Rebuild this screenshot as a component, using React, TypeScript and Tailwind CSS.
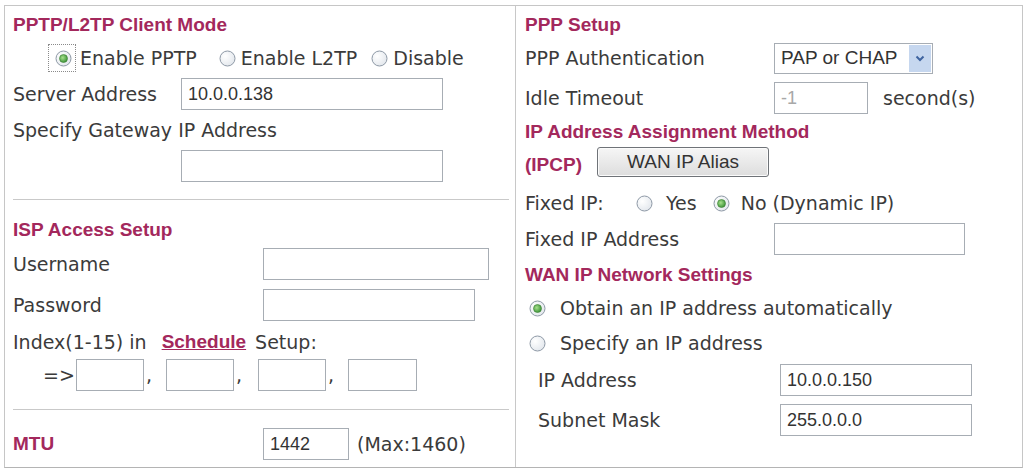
import { useId } from "react";

const LABEL = "font-['DejaVu_Sans',sans-serif] text-[19px] text-[#3b3b3b] whitespace-nowrap";
const TITLE = "font-['Liberation_Sans',Arial,sans-serif] font-bold text-[19px] text-[#a3285c] whitespace-nowrap";
const FIELD =
    "h-[32px] border border-[#a7adb4] bg-white px-[6px] flex items-center font-['Liberation_Sans',Arial,sans-serif] text-[18px] text-[#333]";

function Radio({ checked = false }: { checked?: boolean }) {
    const id = useId();
    return (
        <svg width="17" height="17" viewBox="0 0 17 17" className="shrink-0">
            <defs>
                <radialGradient id={`${id}-bg`} cx="0.35" cy="0.35" r="0.8">
                    <stop offset="0" stopColor="#ffffff" />
                    <stop offset="1" stopColor="#dfe4ea" />
                </radialGradient>
                <radialGradient id={`${id}-dot`} cx="0.4" cy="0.4" r="0.7">
                    <stop offset="0" stopColor="#a6e08c" />
                    <stop offset="1" stopColor="#2f8a2c" />
                </radialGradient>
            </defs>
            <circle cx="8.5" cy="8.5" r="7.5" fill={`url(#${id}-bg)`} stroke="#8e99a6" />
            {checked && <circle cx="8.5" cy="8.5" r="4" fill={`url(#${id}-dot)`} stroke="#3c7f35" strokeWidth="0.6" />}
        </svg>
    );
}

function Field({ value = "", className = "", muted = false }: { value?: string; className?: string; muted?: boolean }) {
    return (
        <div className={`${FIELD} ${className}`}>
            <span className={muted ? "text-[#a8a8a8]" : ""}>{value}</span>
        </div>
    );
}

function Row({ className = "", children }: { className?: string; children: React.ReactNode }) {
    return <div className={`h-[32px] flex items-center shrink-0 ${className}`}>{children}</div>;
}

function ClientMode() {
    return (
        <div className="w-[511px] border-r border-[#c8c8c8] pl-[8px] pr-[6px] flex flex-col">
            <Row className="mt-[3px]">
                <span className={TITLE}>PPTP/L2TP Client Mode</span>
            </Row>
            <Row className="mt-px">
                <span className="ml-[35px] w-[28px] h-[28px] border border-dotted border-[#8a8a8a] flex items-center pl-[6px]">
                    <Radio checked />
                </span>
                <span className={`${LABEL} ml-[4px]`}>Enable PPTP</span>
                <span className="ml-[22px]"><Radio /></span>
                <span className={`${LABEL} ml-[5px]`}>Enable L2TP</span>
                <span className="ml-[14px]"><Radio /></span>
                <span className={`${LABEL} ml-[5px]`}>Disable</span>
            </Row>
            <Row className="mt-[4px]">
                <span className={`${LABEL} w-[168px]`}>Server Address</span>
                <Field value="10.0.0.138" className="w-[262px]" />
            </Row>
            <Row className="mt-[4px]">
                <span className={LABEL}>Specify Gateway IP Address</span>
            </Row>
            <Row className="mt-[4px]">
                <Field className="ml-[168px] w-[262px]" />
            </Row>
            <div className="mt-[17px] border-t border-[#c9c9c9]" />

            <Row className="mt-[14px]">
                <span className={TITLE}>ISP Access Setup</span>
            </Row>
            <Row className="mt-[2px]">
                <span className={`${LABEL} w-[250px]`}>Username</span>
                <Field className="w-[226px]" />
            </Row>
            <Row className="mt-[9px]">
                <span className={`${LABEL} w-[250px]`}>Password</span>
                <Field className="w-[212px]" />
            </Row>
            <Row className="mt-[5px]">
                <span className={LABEL}>Index(1-15) in</span>
                <a className={`${TITLE} underline ml-[15px]`}>Schedule</a>
                <span className={`${LABEL} ml-[9px]`}>Setup:</span>
            </Row>
            <Row className="mt-px">
                <span className={`${LABEL} ml-[30px] w-[33px]`}>=&gt;</span>
                <Field className="w-[68px]" />
                <span className={`${LABEL} ml-[2px] w-[20px]`}>,</span>
                <Field className="w-[68px]" />
                <span className={`${LABEL} ml-[2px] w-[22px]`}>,</span>
                <Field className="w-[68px]" />
                <span className={`${LABEL} ml-[2px] w-[20px]`}>,</span>
                <Field className="w-[69px]" />
            </Row>
            <div className="mt-[18px] border-t border-[#c9c9c9]" />

            <Row className="mt-[18px]">
                <span className={`${TITLE} w-[250px]`}>MTU</span>
                <Field value="1442" className="w-[86px]" />
                <span className={`${LABEL} ml-[8px]`}>(Max:1460)</span>
            </Row>
        </div>
    );
}

function PppSetup() {
    return (
        <div className="flex-1 pl-[9px] flex flex-col">
            <Row className="mt-[3px]">
                <span className={TITLE}>PPP Setup</span>
            </Row>
            <Row className="mt-px">
                <span className={`${LABEL} w-[249px]`}>PPP Authentication</span>
                <div className="w-[159px] h-[31px] border border-[#a7adb4] bg-white flex items-center pl-[6px] pr-[1px] py-[1px]">
                    <span className="flex-1 font-['Liberation_Sans',Arial,sans-serif] text-[19px] text-[#333] whitespace-nowrap">PAP or CHAP</span>
                    <span className="w-[22px] h-full bg-[#c6d7ef] flex items-center justify-center">
                        <svg width="10" height="7" viewBox="0 0 10 7">
                            <path d="M1.5 1.5 L5 5 L8.5 1.5" fill="none" stroke="#3f64a0" strokeWidth="2" />
                        </svg>
                    </span>
                </div>
            </Row>
            <Row className="mt-[8px]">
                <span className={`${LABEL} w-[249px]`}>Idle Timeout</span>
                <Field value="-1" muted className="w-[94px]" />
                <span className={`${LABEL} ml-[15px]`}>second(s)</span>
            </Row>
            <div className="mt-[4px] h-[28px] flex items-center">
                <span className={TITLE}>IP Address Assignment Method</span>
            </div>
            <div className="mt-px h-[30px] flex items-center">
                <span className={`${TITLE} w-[72px] mt-[6px]`}>(IPCP)</span>
                <button className="w-[172px] h-[30px] rounded-[3px] border border-[#6f7378] bg-gradient-to-b from-[#f6f6f6] to-[#dddddd] font-['Liberation_Sans',Arial,sans-serif] text-[19px] text-[#333] shadow-[inset_0_0_0_1px_#fbfbfb]">
                    WAN IP Alias
                </button>
            </div>
            <Row className="mt-[10px]">
                <span className={`${LABEL} w-[111px]`}>Fixed IP:</span>
                <Radio />
                <span className={`${LABEL} ml-[13px]`}>Yes</span>
                <span className="ml-[16px]"><Radio checked /></span>
                <span className={`${LABEL} ml-[11px]`}>No (Dynamic IP)</span>
            </Row>
            <Row className="mt-[4px]">
                <span className={`${LABEL} w-[249px]`}>Fixed IP Address</span>
                <Field className="w-[191px]" />
            </Row>
            <Row className="mt-[4px]">
                <span className={TITLE}>WAN IP Network Settings</span>
            </Row>
            <Row className="mt-px">
                <span className="ml-[4px]"><Radio checked /></span>
                <span className={`${LABEL} ml-[14px]`}>Obtain an IP address automatically</span>
            </Row>
            <Row className="mt-[3px]">
                <span className="ml-[4px]"><Radio /></span>
                <span className={`${LABEL} ml-[14px]`}>Specify an IP address</span>
            </Row>
            <Row className="mt-[5px]">
                <span className={`${LABEL} ml-[13px] w-[242px]`}>IP Address</span>
                <Field value="10.0.0.150" className="w-[192px]" />
            </Row>
            <Row className="mt-[8px]">
                <span className={`${LABEL} ml-[13px] w-[242px]`}>Subnet Mask</span>
                <Field value="255.0.0.0" className="w-[192px]" />
            </Row>
        </div>
    );
}

export default function App() {
    return (
        <div className="w-[1026px] h-[470px] bg-white pt-[5px] pl-[4px]">
            <div className="w-[1019px] h-[463px] border border-[#c6c6c6] border-b-[#b4b4b4] flex">
                <ClientMode />
                <PppSetup />
            </div>
        </div>
    );
}
